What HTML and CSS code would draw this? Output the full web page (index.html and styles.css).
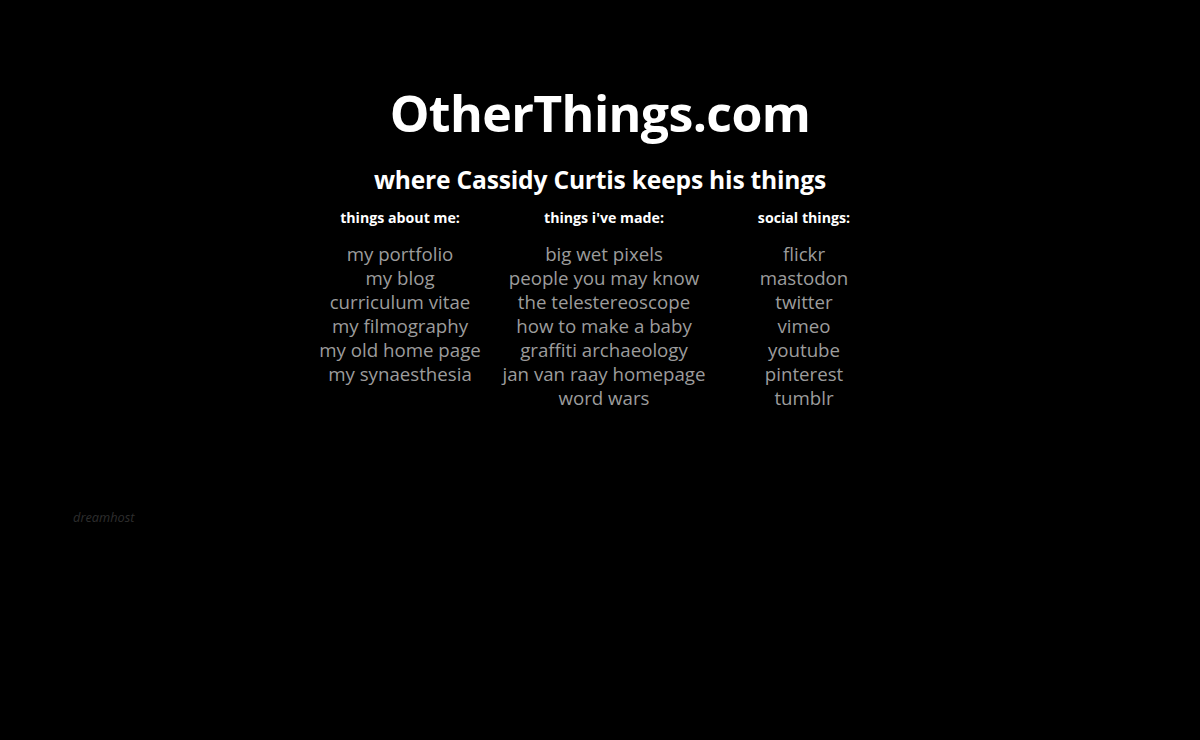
FILE: index.html
```html
<!DOCTYPE html>
<html>
<head>
<meta charset="utf-8">
<title>OtherThings.com</title>
<link rel="stylesheet" href="styles.css">
</head>
<body>
<div class="page">
  <h1 class="title">OtherThings.com</h1>
  <h2 class="subtitle">where Cassidy Curtis keeps his things</h2>
  <div class="columns">
    <div class="col">
      <h3 class="col-head">things about me:</h3>
      <ul class="links">
        <li><a href="#">my portfolio</a></li>
        <li><a href="#">my blog</a></li>
        <li><a href="#">curriculum vitae</a></li>
        <li><a href="#">my filmography</a></li>
        <li><a href="#">my old home page</a></li>
        <li><a href="#">my synaesthesia</a></li>
      </ul>
    </div>
    <div class="col">
      <h3 class="col-head">things i've made:</h3>
      <ul class="links">
        <li><a href="#">big wet pixels</a></li>
        <li><a href="#">people you may know</a></li>
        <li><a href="#">the telestereoscope</a></li>
        <li><a href="#">how to make a baby</a></li>
        <li><a href="#">graffiti archaeology</a></li>
        <li><a href="#">jan van raay homepage</a></li>
        <li><a href="#">word wars</a></li>
      </ul>
    </div>
    <div class="col">
      <h3 class="col-head">social things:</h3>
      <ul class="links">
        <li><a href="#">flickr</a></li>
        <li><a href="#">mastodon</a></li>
        <li><a href="#">twitter</a></li>
        <li><a href="#">vimeo</a></li>
        <li><a href="#">youtube</a></li>
        <li><a href="#">pinterest</a></li>
        <li><a href="#">tumblr</a></li>
      </ul>
    </div>
  </div>
  <div class="footer"><a href="#">dreamhost</a></div>
</div>
</body>
</html>
```

FILE: styles.css
```css
html, body {
  margin: 0;
  padding: 0;
  background: #000;
}
body {
  font-family: "Open Sans", "Noto Sans", sans-serif;
  color: #fff;
}
.page {
  padding-top: 80px;
}
.title {
  margin: 0;
  text-align: center;
  font-size: 50px;
  font-weight: 700;
  line-height: 66px;
  letter-spacing: -0.6px;
}
.subtitle {
  margin: 18px 0 0 0;
  text-align: center;
  font-size: 24.6px;
  font-weight: 700;
  line-height: 32px;
  letter-spacing: -0.2px;
}
.columns {
  display: grid;
  grid-template-columns: 184px 224px 176px;
  justify-content: center;
  margin-top: 12px;
}
.col {
  text-align: center;
}
.col-head {
  margin: 0;
  font-size: 14.2px;
  font-weight: 700;
  line-height: 20px;
}
.links {
  list-style: none;
  margin: 14px 0 0 0;
  padding: 0;
}
.links li {
  font-size: 18.7px;
  line-height: 24px;
}
.links a {
  color: #9c9c9c;
  text-decoration: none;
}
.footer {
  margin-top: 98px;
  padding-left: 73px;
  font-size: 12.8px;
  font-style: italic;
}
.footer a {
  color: #2e2e2e;
  text-decoration: none;
}
```
